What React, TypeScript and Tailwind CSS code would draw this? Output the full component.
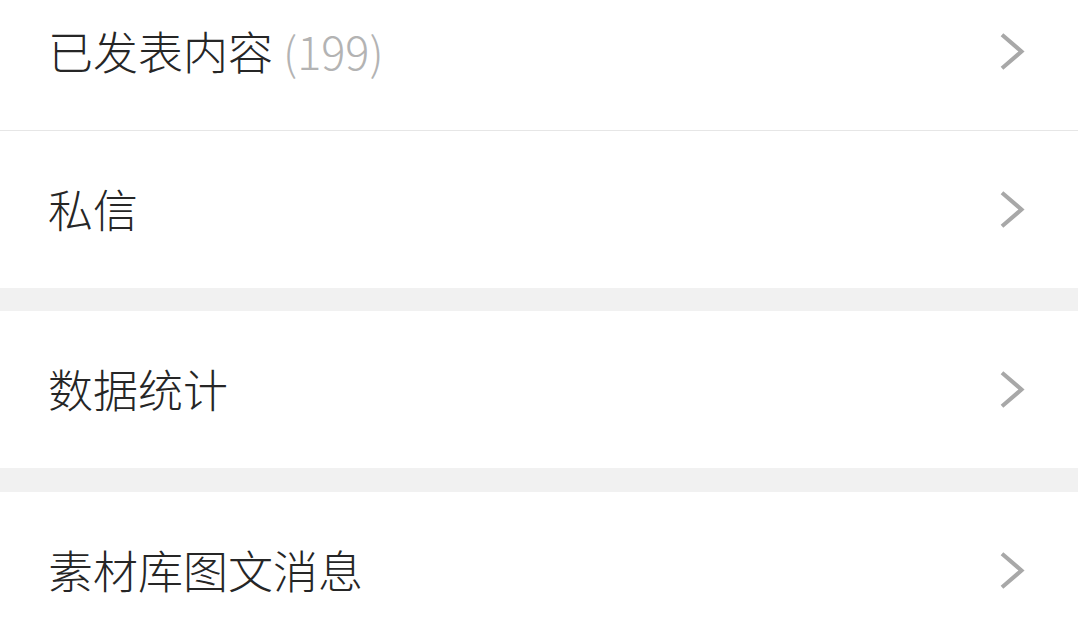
import React from "react"

function Chevron() {
  return (
    <svg width="26" height="38" viewBox="0 0 26 38" fill="none" className="shrink-0">
      <path d="M3.5 3 L21.5 18.5 L3.5 34" stroke="#a8a8a8" strokeWidth="4" strokeLinecap="square" strokeLinejoin="miter" />
    </svg>
  )
}

function Row({ label, count, first, border }: { label: string; count?: number; first?: boolean; border?: boolean }) {
  return (
    <div
      className={
        "box-border flex h-[157px] items-center justify-between bg-white pl-[48px] pr-[52px] " +
        (first ? "-mt-[26px] " : "") +
        (border ? "border-b border-[#e6e6e6]" : "")
      }
    >
      <div className="-mt-[3px] text-[45px] font-light leading-none text-[#262626]">
        {label}
        {count !== undefined && <span className="text-[#b3b3b3]"> ({count})</span>}
      </div>
      <Chevron />
    </div>
  )
}

export default function App() {
  return (
    <div
      className="h-[619px] w-full overflow-hidden bg-white"
      style={{ fontFamily: '"Noto Sans CJK SC", "Noto Sans", sans-serif' }}
    >
      <Row label="已发表内容" count={199} first border />
      <Row label="私信" />
      <div className="h-[23px] bg-[#f1f1f1]" />
      <Row label="数据统计" />
      <div className="h-[24px] bg-[#f1f1f1]" />
      <Row label="素材库图文消息" />
    </div>
  )
}
